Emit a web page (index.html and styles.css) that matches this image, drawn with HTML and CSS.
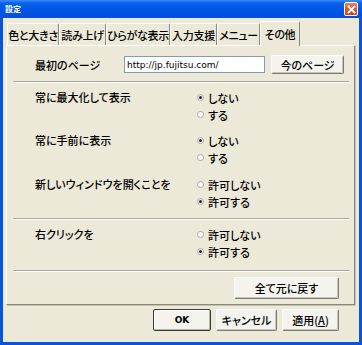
FILE: index.html
```html
<!DOCTYPE html>
<html lang="ja">
<head>
    <meta charset="UTF-8">
    <title>設定</title>
    <link rel="stylesheet" href="styles.css">
</head>
<body>
    <div class="window">
        <div class="titlebar">
            <span class="title">設定</span>
            <span class="close">
                <svg width="9" height="9" viewBox="0 0 9 9"><path d="M1.5 1.5 L7.5 7.5 M7.5 1.5 L1.5 7.5" stroke="#fff" stroke-width="1.8" stroke-linecap="square"/></svg>
            </span>
        </div>
        <div class="client">
            <div class="tabs">
                <div class="tab" style="width:52px">色と大きさ</div>
                <div class="tab" style="width:47px">読み上げ</div>
                <div class="tab" style="width:64px">ひらがな表示</div>
                <div class="tab" style="width:47px">入力支援</div>
                <div class="tab" style="width:43px">メニュー</div>
                <div class="tab active" style="width:40px">その他</div>
            </div>
            <div class="panel">
                <div class="home-row">
                    <span class="label">最初のページ</span>
                    <input class="url" type="text" value="http://jp.fujitsu.com/">
                    <button class="btn now">今のページ</button>
                </div>
                <div class="sep"></div>

                <div class="group g1">
                    <span class="label">常に最大化して表示</span>
                    <div class="opts">
                        <div class="opt"><span class="radio on"></span>しない</div>
                        <div class="opt"><span class="radio"></span>する</div>
                    </div>
                </div>
                <div class="group g2">
                    <span class="label">常に手前に表示</span>
                    <div class="opts">
                        <div class="opt"><span class="radio on"></span>しない</div>
                        <div class="opt"><span class="radio"></span>する</div>
                    </div>
                </div>
                <div class="group g3">
                    <span class="label">新しいウィンドウを開くことを</span>
                    <div class="opts">
                        <div class="opt"><span class="radio"></span>許可しない</div>
                        <div class="opt"><span class="radio on"></span>許可する</div>
                    </div>
                </div>
                <div class="sep s2"></div>

                <div class="group g4">
                    <span class="label">右クリックを</span>
                    <div class="opts">
                        <div class="opt"><span class="radio"></span>許可しない</div>
                        <div class="opt"><span class="radio on"></span>許可する</div>
                    </div>
                </div>
                <div class="sep s3"></div>

                <div class="reset-row">
                    <button class="btn reset">全て元に戻す</button>
                </div>
            </div>
            <div class="actions">
                <button class="btn default ok">OK</button>
                <button class="btn cancel">キャンセル</button>
                <button class="btn apply">適用(<u>A</u>)</button>
            </div>
        </div>
    </div>
</body>
</html>
```

FILE: styles.css
```css
body {
    margin: 0;
    font-family: "Noto Sans CJK JP", "DejaVu Sans", sans-serif;
    font-size: 11px;
    font-weight: 500;
    font-feature-settings: "palt";
    color: #000;
    background: #0a4fd8;
}
.window {
    width: 362px;
    height: 345px;
    box-sizing: border-box;
    padding: 0 3px 3px 3px;
    background: #0855dd;
    display: flex;
    flex-direction: column;
}
.titlebar {
    height: 18px;
    margin: 0 -3px;
    padding: 0 3px 0 5px;
    display: flex;
    align-items: center;
    justify-content: space-between;
    background: linear-gradient(#3d8ef9 0, #0a62ea 3px, #0056e6 9px, #0050de 15px, #0a4ed6 18px);
}
.title {
    color: #fff;
    font-size: 8px;
    line-height: 1;
    font-weight: bold;
}
.close {
    width: 12px;
    height: 12px;
    margin-right: 1px;
    border: 1px solid #fff;
    border-radius: 2px;
    background: linear-gradient(#e9825e, #d9521f 60%, #c8441b);
    display: flex;
    align-items: center;
    justify-content: center;
}
.client {
    flex: 1;
    background: #ece9d8;
    padding: 3px 4px 0 3px;
}
.tabs {
    display: flex;
    align-items: flex-end;
    height: 24px;
    padding-left: 1px;
    position: relative;
    z-index: 1;
}
.tab {
    box-sizing: border-box;
    height: 22px;
    border: 1px solid #fff;
    border-right-color: #8a877b;
    border-bottom: none;
    border-radius: 2px 2px 0 0;
    text-align: center;
    line-height: 22px;
    white-space: nowrap;
    letter-spacing: -0.3px;
}
.tab.active {
    height: 25px;
    margin-bottom: -1px;
    background: #ece9d8;
    line-height: 24px;
}
.panel {
    box-sizing: border-box;
    height: 260px;
    border: 1px solid #fff;
    border-right-color: #8a877b;
    border-bottom-color: #8a877b;
    box-shadow: 1px 1px 0 #c5c2b2;
    padding: 0 5px 0 6px;
}
.home-row {
    display: flex;
    align-items: center;
    margin-top: 9px;
    height: 19px;
    padding-left: 22px;
}
.home-row .label {
    width: 89px;
}
.url {
    box-sizing: border-box;
    width: 141px;
    height: 17px;
    border: 1px solid #7f9db9;
    padding: 0 2px;
    font-family: "DejaVu Sans", sans-serif;
    font-size: 9px;
    font-weight: 500;
    color: #000;
    background: #fff;
}
.btn {
    box-sizing: border-box;
    font-family: "Noto Sans CJK JP", sans-serif;
    font-size: 11px;
    font-weight: 500;
    font-feature-settings: "palt";
    color: #000;
    background: #f4f3ee;
    border: 1px solid;
    border-color: #fff #7b7a73 #7b7a73 #fff;
    box-shadow: inset -1px -1px 0 #c9c6b8;
    border-radius: 2px;
    padding: 0;
}
.now {
    width: 73px;
    height: 19px;
    margin-left: 6px;
}
.sep {
    margin-top: 7px;
    height: 0;
    border-top: 1px solid #aca899;
    border-bottom: 1px solid #fff;
}
.group {
    display: grid;
    grid-template-columns: 162px 1fr;
    padding-left: 22px;
}
.group .label {
    line-height: 17px;
}
.g1 { margin-top: 6px; }
.g2 { margin-top: 9px; }
.g3 { margin-top: 10px; }
.g4 { margin-top: 6px; }
.s2 { margin-top: 8px; }
.s3 { margin-top: 10px; }
.opt {
    display: flex;
    align-items: center;
    height: 17px;
}
.radio {
    box-sizing: border-box;
    width: 7px;
    height: 7px;
    margin-right: 4px;
    border: 1px solid #a8a69c;
    border-radius: 50%;
    background: #fff;
    position: relative;
}
.radio.on::after {
    content: "";
    position: absolute;
    left: 1px;
    top: 1px;
    width: 3px;
    height: 3px;
    border-radius: 50%;
    background: #222;
}
.reset-row {
    display: flex;
    justify-content: flex-end;
    margin-top: 5px;
    padding-right: 10px;
}
.reset {
    width: 105px;
    height: 22px;
}
.actions {
    display: flex;
    justify-content: flex-end;
    gap: 5px;
    margin-top: 4px;
    padding-right: 16px;
}
.actions .btn {
    height: 22px;
}
.ok {
    width: 58px;
    font-family: "DejaVu Sans", sans-serif;
    font-size: 9px;
    font-weight: bold;
}
.default {
    border-color: #3b3b3b;
    box-shadow: inset 1px 1px 0 #fff, inset -1px -1px 0 #b7b4a6;
}
.cancel {
    width: 61px;
}
.apply {
    width: 57px;
}
```
